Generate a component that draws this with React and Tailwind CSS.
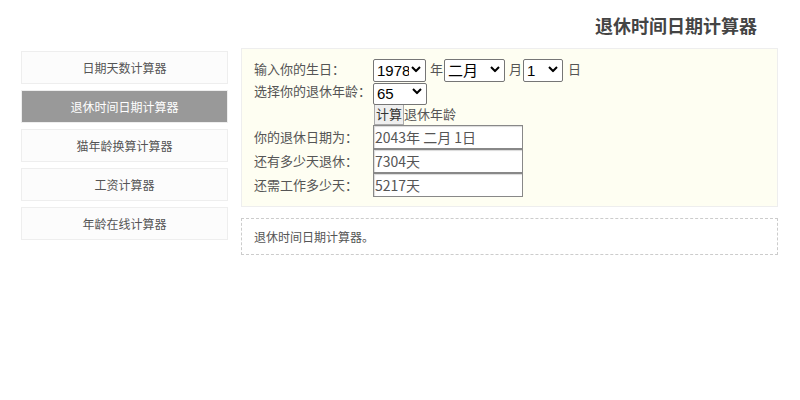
const menu = ['日期天数计算器', '退休时间日期计算器', '猫年龄换算计算器', '工资计算器', '年龄在线计算器']

const Row = ({ label, children }) => (
  <div className="flex items-center">
    <div className="w-[119px] shrink-0 text-[13px] text-[#555]">{label}</div>
    <div className="flex items-center">{children}</div>
  </div>
)

const Select = ({ value, className }) => (
  <div className={'relative ' + className}>
    <select
      className="h-full w-full appearance-none rounded-[2px] border border-[#767676] bg-white pl-[3px] pr-[16px] text-[15px] leading-none text-black font-['Liberation_Sans','Noto_Sans_CJK_SC',sans-serif]"
      defaultValue={value}
    >
      <option>{value}</option>
    </select>
    <svg className="pointer-events-none absolute right-[5px] top-1/2 -translate-y-1/2" width="10" height="7" viewBox="0 0 10 7">
      <path d="M1 1.5 L5 5.5 L9 1.5" fill="none" stroke="#000" strokeWidth="2" />
    </svg>
  </div>
)

const inputCls = 'h-[24px] w-[150px] border border-[#888] bg-white px-[1px] text-[14px] text-[#555] shadow-[inset_1px_1px_1px_rgba(0,0,0,0.15)]'

export default function App() {
  return (
    <div className="w-[800px] h-[400px] bg-white font-['Noto_Sans_CJK_SC',sans-serif]">
      <div className="flex justify-end pr-[43px] pt-[12px] h-[48px]">
        <h1 className="text-[18px] font-bold text-[#444] leading-[26px]">退休时间日期计算器</h1>
      </div>
      <div className="flex gap-[13px] pl-[21px]">
        <div className="flex w-[207px] flex-col gap-[6px] pt-[3px]">
          {menu.map((m, i) => (
            <div
              key={m}
              className={
                i === 1
                  ? 'flex h-[33px] items-center justify-center border border-[#eee] bg-[#999] text-[12px] text-white'
                  : 'flex h-[33px] items-center justify-center border border-[#eee] bg-[#fcfcfc] text-[12px] text-[#555]'
              }
            >
              {m}
            </div>
          ))}
        </div>
        <div className="flex w-[537px] flex-col gap-[11px]">
          <div className="border border-[#eee] bg-[#fefef2] pl-[12px] pt-[8px] pb-[9px]">
            <Row label="输入你的生日：">
              <Select value="1978" className="h-[23px] w-[53px]" />
              <span className="ml-[4px] mr-[1px] text-[13px] text-[#555]">年</span>
              <Select value="二月" className="h-[23px] w-[61px]" />
              <span className="ml-[4px] mr-[1px] text-[13px] text-[#555]">月</span>
              <Select value="1" className="h-[23px] w-[40px]" />
              <span className="ml-[5px] text-[13px] text-[#555]">日</span>
            </Row>
            <Row label="选择你的退休年龄：">
              <Select value="65" className="h-[22px] w-[54px]" />
            </Row>
            <Row label="">
              <button className="ml-[1px] h-[23px] border border-[#aaa] bg-[#efefef] px-[1px] text-[13px] text-[#333]">计算</button>
              <span className="text-[13px] text-[#555]">退休年龄</span>
            </Row>
            <Row label="你的退休日期为：">
              <input className={inputCls} readOnly value="2043年 二月 1日" />
            </Row>
            <Row label="还有多少天退休：">
              <input className={inputCls} readOnly value="7304天" />
            </Row>
            <Row label="还需工作多少天：">
              <input className={inputCls} readOnly value="5217天" />
            </Row>
          </div>
          <div className="flex h-[37px] items-center border border-dashed border-[#ccc] pl-[12px] text-[12px] text-[#555]">
            退休时间日期计算器。
          </div>
        </div>
      </div>
    </div>
  )
}
